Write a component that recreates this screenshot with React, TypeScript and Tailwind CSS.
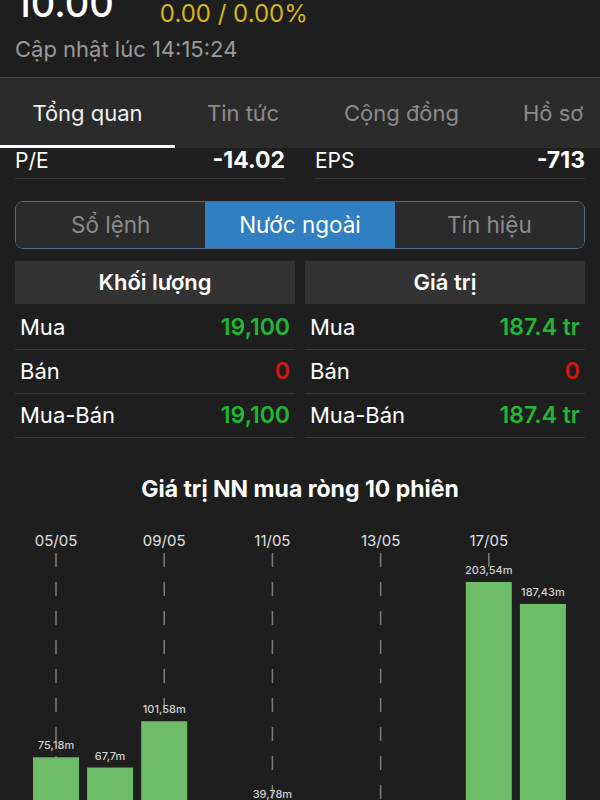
import React from 'react'

const tabs = [
  { name: 'Tổng quan', w: 'w-[175px] justify-center', active: true },
  { name: 'Tin tức', w: 'w-[136px] justify-center', active: false },
  { name: 'Cộng đồng', w: 'w-[181px] justify-center', active: false },
  { name: 'Hồ sơ', w: 'w-[108px] justify-start pl-[31px]', active: false },
]

const segments = ['Sổ lệnh', 'Nước ngoài', 'Tín hiệu']

const volumeRows = [
  { label: 'Mua', value: '19,100', color: 'text-[#22b536]' },
  { label: 'Bán', value: '0', color: 'text-[#cc1a12]' },
  { label: 'Mua-Bán', value: '19,100', color: 'text-[#22b536]' },
]

const valueRows = [
  { label: 'Mua', value: '187.4 tr', color: 'text-[#22b536]' },
  { label: 'Bán', value: '0', color: 'text-[#cc1a12]' },
  { label: 'Mua-Bán', value: '187.4 tr', color: 'text-[#22b536]' },
]

const sessions: { date: string; value: number | null; label?: string }[] = [
  { date: '05/05', value: 75.18, label: '75,18m' },
  { date: '06/05', value: 67.7, label: '67,7m' },
  { date: '09/05', value: 101.58, label: '101,58m' },
  { date: '10/05', value: null },
  { date: '11/05', value: 39.78, label: '39,78m' },
  { date: '12/05', value: null },
  { date: '13/05', value: null },
  { date: '16/05', value: null },
  { date: '17/05', value: 203.54, label: '203,54m' },
  { date: '18/05', value: 187.43, label: '187,43m' },
]

function Table({ title, rows }: { title: string; rows: typeof volumeRows }) {
  return (
    <div className="w-[280px] flex flex-col">
      <div className="h-[43px] bg-[#333333] flex items-center justify-center text-white text-[22px] font-semibold">
        {title}
      </div>
      <div className="mt-[2px]">
        {rows.map((r) => (
          <div
            key={r.label}
            className="h-[44px] flex items-center justify-between px-[5px] border-b border-[#383838]"
          >
            <span className="text-white text-[22px]">{r.label}</span>
            <span className={`${r.color} text-[23px] font-semibold`}>{r.value}</span>
          </div>
        ))}
      </div>
    </div>
  )
}

function NetBuyChart() {
  const base = 340
  const scale = 1.366
  const cx = (i: number) => 56 + 54.1 * i

  return (
    <svg width="600" height="280" viewBox="0 0 600 280" className="block">
      {sessions.map((s, i) =>
        i % 2 === 0 ? (
          <g key={s.date}>
            <text
              x={cx(i)}
              y={26}
              textAnchor="middle"
              fontSize="15"
              fill="#e0e0e0"
              fontFamily="Inter, sans-serif"
            >
              {s.date}
            </text>
            <line
              x1={cx(i)}
              x2={cx(i)}
              y1={33}
              y2={280}
              stroke="#7d7d7d"
              strokeWidth="1.5"
              strokeDasharray="14 15"
            />
          </g>
        ) : null
      )}
      {sessions.map((s, i) => {
        if (s.value === null) return null
        const top = base - s.value * scale
        return (
          <g key={s.date + 'b'}>
            <rect x={cx(i) - 23} y={top} width="46" height={base - top} fill="#6dbd68" />
            <text
              x={cx(i)}
              y={top - 8}
              textAnchor="middle"
              fontSize="11"
              fontWeight="500"
              fill="#d0d0d0"
              fontFamily="Inter, sans-serif"
            >
              {s.label}
            </text>
          </g>
        )
      })}
    </svg>
  )
}

export default function App() {
  return (
    <div className="w-[600px] h-[800px] overflow-hidden bg-[#1e1e1e] font-['Inter','Noto_Sans',sans-serif]">
      {/* Quote header */}
      <div className="h-[78px] flex flex-col px-[15px] border-b border-[#4a4a4a]">
        <div className="flex items-start -mt-[16px]">
          <span className="text-white text-[38px] leading-none font-medium">10.00</span>
          <span className="ml-[46px] mt-[18px] text-[#d6b51f] text-[24px] leading-none">
            0.00 / 0.00%
          </span>
        </div>
        <div className="mt-[12px] text-[#9a9a9a] text-[22px] leading-none">
          Cập nhật lúc 14:15:24
        </div>
      </div>

      {/* Tabs */}
      <div className="h-[70px] bg-[#2b2b2b] flex">
        {tabs.map((t) => (
          <div
            key={t.name}
            className={`${t.w} shrink-0 relative flex items-center text-[22px] ${
              t.active ? 'text-[#f0f0f0]' : 'text-[#8c8c8c]'
            }`}
          >
            {t.name}
            {t.active && <div className="absolute left-0 right-0 bottom-0 h-[3px] bg-white" />}
          </div>
        ))}
      </div>

      {/* P/E, EPS */}
      <div className="flex px-[15px] gap-[30px]">
        <div className="w-[270px] h-[31px] flex justify-between items-start border-b border-[#383838]">
          <span className="text-white text-[21px] leading-none mt-[2px]">P/E</span>
          <span className="text-white text-[23px] font-bold leading-none mt-[1px]">-14.02</span>
        </div>
        <div className="w-[270px] h-[31px] flex justify-between items-start border-b border-[#383838]">
          <span className="text-white text-[21px] leading-none mt-[2px]">EPS</span>
          <span className="text-white text-[23px] font-bold leading-none mt-[1px]">-713</span>
        </div>
      </div>

      {/* Segmented control */}
      <div className="mx-[15px] mt-[22px] h-[48px] flex rounded-[8px] border-[1.5px] border-[#4f6f8c] overflow-hidden">
        {segments.map((s) => (
          <div
            key={s}
            className={`flex-1 flex items-center justify-center text-[22.5px] ${
              s === 'Nước ngoài' ? 'bg-[#2f7fc2] text-white' : 'bg-[#2b2b2b] text-[#8c8c8c]'
            }`}
          >
            {s}
          </div>
        ))}
      </div>

      {/* Foreign trading tables */}
      <div className="flex px-[15px] gap-[10px] mt-[12px]">
        <Table title="Khối lượng" rows={volumeRows} />
        <Table title="Giá trị" rows={valueRows} />
      </div>

      {/* Chart */}
      <div className="mt-[39px] text-center text-white text-[23px] font-bold leading-[24px]">
        Giá trị NN mua ròng 10 phiên
      </div>
      <div className="mt-[19px]">
        <NetBuyChart />
      </div>
    </div>
  )
}
